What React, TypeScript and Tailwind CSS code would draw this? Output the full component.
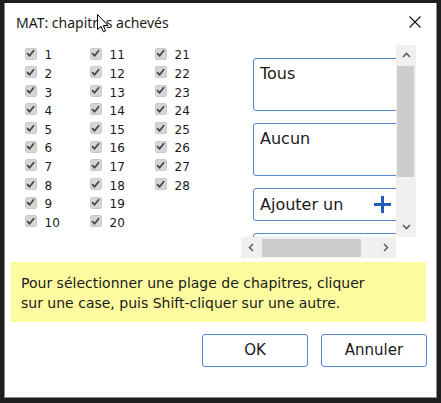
import React from 'react';

const Check: React.FC = () => (
  <span className="w-[12px] h-[12px] mb-[4px] rounded-[2px] bg-[#d6d6d6] border border-[#c9c9c9] flex items-center justify-center shrink-0">
    <svg width="9" height="9" viewBox="0 0 9 9">
      <path d="M1.6 4.6 L3.6 6.8 L7.6 1.8" fill="none" stroke="#474747" strokeWidth="1.8" strokeLinecap="round" strokeLinejoin="round" />
    </svg>
  </span>
);

const Chevron: React.FC<{ dir: 'up' | 'down' | 'left' | 'right' }> = ({ dir }) => {
  const d = {
    up: 'M1 6 L4.5 2.5 L8 6',
    down: 'M1 3 L4.5 6.5 L8 3',
    left: 'M6 1 L2.5 4.5 L6 8',
    right: 'M3 1 L6.5 4.5 L3 8',
  }[dir];
  return (
    <svg width="9" height="9" viewBox="0 0 9 9">
      <path d={d} fill="none" stroke="#606060" strokeWidth="1.6" />
    </svg>
  );
};

const App: React.FC = () => {
  const chapters = Array.from({ length: 28 }, (_, i) => i + 1);
  const verdana = { fontFamily: '"DejaVu Sans", Verdana, sans-serif' };

  return (
    <div className="w-[441px] h-[403px] bg-[#1e1e1e] pt-[3px] pl-[4px] relative overflow-hidden">
      <div className="w-[433px] h-[395px] bg-white border-l border-r border-b border-[#8c8c8c] flex flex-col">
        {/* title bar */}
        <div className="h-[38px] flex items-center justify-between pl-[11px] pr-[15px]">
          <span className="text-[14px] text-[#1a1a1a]" style={{ fontFamily: '"Noto Sans", "Open Sans", sans-serif' }}>
            MAT: chapitres achevés
          </span>
          <svg width="12" height="12" viewBox="0 0 12 12">
            <path d="M0.5 0.5 L11.5 11.5 M11.5 0.5 L0.5 11.5" stroke="#111" strokeWidth="1.1" />
          </svg>
        </div>

        {/* body */}
        <div className="flex items-start pt-[4px] pl-[19.5px]">
          <div className="mt-[1.2px] grid grid-flow-col grid-cols-[65px_65px_65px] grid-rows-[repeat(10,18.67px)] text-[12px] text-[#1a1a1a]" style={verdana}>
            {chapters.map(n => (
              <div key={n} className="flex items-center gap-[8px] leading-[18.67px]">
                <Check />
                <span>{n}</span>
              </div>
            ))}
          </div>

          <div className="ml-[21.5px] w-[175px] h-[213px] grid grid-cols-[155px_20px] grid-rows-[192px_21px]">
            <div className="overflow-hidden pl-[12px] pt-[13px] flex flex-col gap-[12px] text-[16px] text-[#1a1a1a]" style={verdana}>
              <div className="w-[160px] h-[53px] shrink-0 border border-[#5585d3] rounded-[3px] pl-[6px] pt-[5px] leading-[20px]">Tous</div>
              <div className="w-[160px] h-[53px] shrink-0 border border-[#5585d3] rounded-[3px] pl-[6px] pt-[5px] leading-[20px]">Aucun</div>
              <div className="w-[160px] h-[33px] shrink-0 border border-[#5585d3] rounded-[3px] pl-[6px] flex items-center">
                <span className="leading-[20px]">Ajouter un</span>
                <svg className="ml-[30px]" width="19" height="19" viewBox="0 0 19 19">
                  <path d="M9.5 1 V18 M1 9.5 H18" stroke="#1f5fb8" strokeWidth="3" />
                </svg>
              </div>
              <div className="w-[160px] h-[33px] shrink-0 border border-[#5585d3] rounded-[3px]" />
            </div>

            {/* vertical scrollbar */}
            <div className="bg-[#f0f0f0] flex flex-col items-center">
              <div className="h-[21px] flex items-center justify-center"><Chevron dir="up" /></div>
              <div className="w-[17px] h-[111px] ml-[1px] mr-[2px] bg-[#cdcdcd]" />
              <div className="flex-1" />
              <div className="h-[21px] flex items-center justify-center"><Chevron dir="down" /></div>
            </div>

            {/* horizontal scrollbar */}
            <div className="bg-[#f0f0f0] flex items-center">
              <div className="w-[21px] flex items-center justify-center"><Chevron dir="left" /></div>
              <div className="w-[99px] h-[18px] bg-[#cdcdcd]" />
              <div className="flex-1" />
              <div className="w-[21px] flex items-center justify-center"><Chevron dir="right" /></div>
            </div>
            <div className="bg-white" />
          </div>
        </div>

        {/* hint */}
        <div className="mt-[4px] ml-[6px] w-[415px] h-[60px] bg-[#fdfaa0] pl-[10px] pt-[11px] text-[14px] leading-[20px] text-[#1a1a1a]" style={verdana}>
          Pour sélectionner une plage de chapitres, cliquer<br />
          sur une case, puis Shift-cliquer sur une autre.
        </div>

        {/* buttons */}
        <div className="mt-[12px] flex justify-end gap-[13px] pr-[9px] text-[15px] text-[#1a1a1a]" style={verdana}>
          <button className="w-[106px] h-[33px] border border-[#5585d3] rounded-[3px] bg-white">OK</button>
          <button className="w-[106px] h-[33px] border border-[#5585d3] rounded-[3px] bg-white">Annuler</button>
        </div>
      </div>

      {/* mouse cursor */}
      <svg className="absolute left-[97px] top-[14px]" width="12" height="19" viewBox="0 0 12 19">
        <path d="M0.5 0.5 V15.5 L4 12.3 L6.4 17.8 L8.6 16.9 L6.3 11.5 L11 11.5 Z" fill="#fff" stroke="#000" strokeWidth="1" strokeLinejoin="round" />
      </svg>
    </div>
  );
};

export default App;
